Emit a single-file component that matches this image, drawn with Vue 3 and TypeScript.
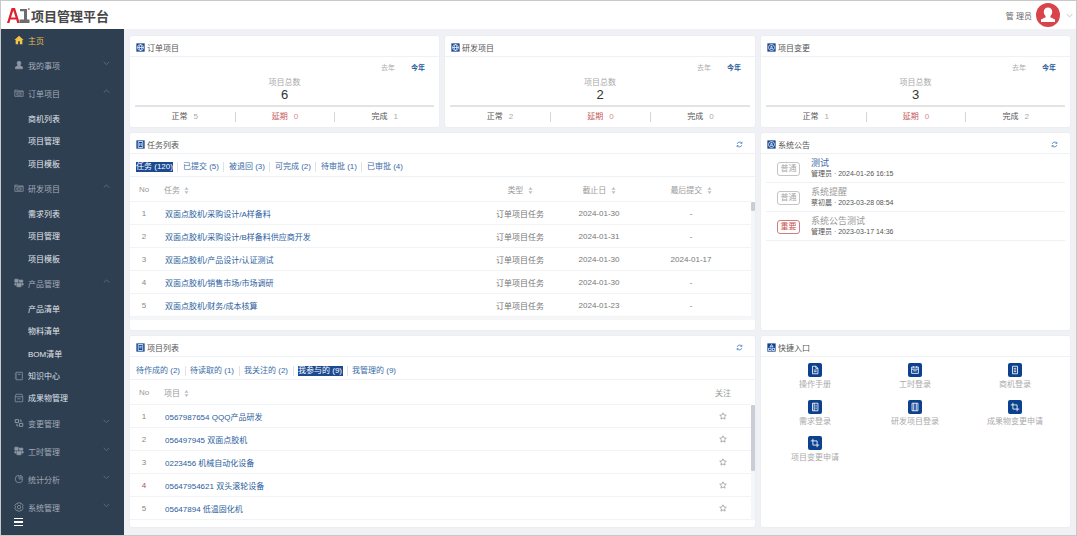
<script setup lang="ts">
type MenuItem = { label: string; icon?: string; kind: 'active' | 'parent' | 'sub' | 'leaf'; open?: boolean }

const icons: Record<string, string> = {
  user: 'M12 3a4.500 4.500 0 0 1 4.500 5c0 2-1 3.500-2 4.500v1.500l6 3v4H3.500v-4l6-3v-1.500c-1-1-2-2.500-2-4.500A4.500 4.500 0 0 1 12 3z',
  folder: 'M2 5h7l2 2h11v13H2zM2 9h20M7 12h10v5H7z',
  cubes: 'M2 3h8v7H2zM13 5h8v5h-8zM7 13h10v8H7zM2 13h3v4H2zM19 13h3v4h-3z',
  book: 'M5 3h15v18H5zM2 7h3M2 12h3M2 17h3M9 8h7',
  archive: 'M3 8l2-5h14l2 5v13H3zM3 9h18M8 14h8',
  change: 'M3 4h8v7H3zM13 13h8v7h-8zM7 14v5h3M17 10V5h-3',
  pie: 'M12 3a9 9 0 1 0 9 9h-9zM15 3a7 7 0 0 1 6 6h-6z',
  gear: 'M9 2h6l1 3 3-1 3 5-2 3 2 3-3 5-3-1-1 3H9l-1-3-3 1-3-5 2-3-2-3 3-5 3 1zM12 8a4 4 0 1 0 0 8 4 4 0 0 0 0-8z',
  doc: 'M6 3h8l5 5v13H6zM14 3v5h5M9 12h7M9 16h7',
  calendar: 'M4 5h16v15H4zM4 10h16M8 3v4M16 3v4M8 14h8',
  notebook: 'M6 3h13v18H6zM10 3v18M13 8h3M13 12h3M13 16h3',
  list: 'M6 3h12v18H6zM9 8h6M9 12h6M9 16h6',
  frame: 'M5 3h14v18H5zM9 3v18M15 3v18',
  crop: 'M7 2v15h15M2 7h15v15',
  globe: 'M12 4a8 8 0 1 0 0 16 8 8 0 0 0 0-16zM4 12h16M12 4c-5 5-5 11 0 16M12 4c5 5 5 11 0 16',
  bell: 'M12 4a8 8 0 1 0 0 16 8 8 0 0 0 0-16zM8 11h8M8 15h8M12 7v4',
  share: 'M12 4l4 6H8zM4 14h7v6H4zM14 14h6v6h-6z',
}

const menu: MenuItem[] = [
  { label: '主页', kind: 'active' },
  { label: '我的事项', icon: 'user', kind: 'parent' },
  { label: '订单项目', icon: 'folder', kind: 'parent', open: true },
  { label: '商机列表', kind: 'sub' },
  { label: '项目管理', kind: 'sub' },
  { label: '项目模板', kind: 'sub' },
  { label: '研发项目', icon: 'folder', kind: 'parent', open: true },
  { label: '需求列表', kind: 'sub' },
  { label: '项目管理', kind: 'sub' },
  { label: '项目模板', kind: 'sub' },
  { label: '产品管理', icon: 'cubes', kind: 'parent', open: true },
  { label: '产品清单', kind: 'sub' },
  { label: '物料清单', kind: 'sub' },
  { label: 'BOM清单', kind: 'sub' },
  { label: '知识中心', icon: 'book', kind: 'leaf' },
  { label: '成果物管理', icon: 'archive', kind: 'leaf' },
  { label: '变更管理', icon: 'change', kind: 'parent' },
  { label: '工时管理', icon: 'cubes', kind: 'parent' },
  { label: '统计分析', icon: 'pie', kind: 'parent' },
  { label: '系统管理', icon: 'gear', kind: 'parent' },
]

const summaries = [
  { title: '订单项目', total: 6, normal: 5, late: 0, done: 1 },
  { title: '研发项目', total: 2, normal: 2, late: 0, done: 0 },
  { title: '项目变更', total: 3, normal: 1, late: 0, done: 2 },
]

const taskTabs = ['任务 (120)', '已提交 (5)', '被退回 (3)', '可完成 (2)', '待审批 (1)', '已审批 (4)']
const tasks = [
  { name: '双面点胶机/采购设计/A样备料', end: '2024-01-30', last: '-' },
  { name: '双面点胶机/采购设计/B样备料供应商开发', end: '2024-01-31', last: '-' },
  { name: '双面点胶机/产品设计/认证测试', end: '2024-01-30', last: '2024-01-17' },
  { name: '双面点胶机/销售市场/市场调研', end: '2024-01-30', last: '-' },
  { name: '双面点胶机/财务/成本核算', end: '2024-01-23', last: '-' },
]

const projectTabs = ['待作成的 (2)', '待读取的 (1)', '我关注的 (2)', '我参与的 (9)', '我管理的 (9)']
const projects = [
  '0567987654 QQQ产品研发',
  '056497945 双面点胶机',
  '0223456 机械自动化设备',
  '05647954621 双头滚轮设备',
  '05647894 低温固化机',
]

const notices = [
  { tag: '普通', title: '测试', meta: '管理员 · 2024-01-26 16:15', hot: false, unread: true },
  { tag: '普通', title: '系统提醒', meta: '蔡初晨 · 2023-03-28 08:54', hot: false, unread: false },
  { tag: '重要', title: '系统公告测试', meta: '管理员 · 2023-03-17 14:36', hot: true, unread: false },
]

const shortcuts = [
  { label: '操作手册', icon: 'doc' },
  { label: '工时登录', icon: 'calendar' },
  { label: '商机登录', icon: 'list' },
  { label: '需求登录', icon: 'notebook' },
  { label: '研发项目登录', icon: 'frame' },
  { label: '成果物变更申请', icon: 'crop' },
  { label: '项目变更申请', icon: 'crop' },
]
</script>

<template>
  <div class="app">
    <header class="topbar">
      <div class="brand">
        <svg class="logo" viewBox="0 0 23 17" aria-hidden="true">
          <path fill="#e0202c" d="M4.600 1h3.400l4.700 15H10.200L9.200 12.500H3.400L2.400 16H0zM4 10.500H8.600L6.300 3.500z" fill-rule="evenodd" />
          <path fill="#6d6d6d" d="M13 2h7v10.500h2.500V16H12.500v-3.500H17V4.200h-4z" />
          <circle cx="21.800" cy="2" r="1" fill="#888" />
        </svg>
        <span class="brand-name">项目管理平台</span>
      </div>
      <div class="account">
        <span class="account-name">管 理员</span>
        <svg class="avatar" viewBox="0 0 24 24" aria-hidden="true">
          <circle cx="12" cy="12" r="12" fill="#d8444a" />
          <path fill="#fff" d="M12 4.500a4.200 4.200 0 0 1 4.200 4.500c0 1.800-.8 3.200-1.800 4v1.200l4.600 2.300v2.500H5v-2.500l4.600-2.300V13c-1-.8-1.800-2.200-1.800-4A4.200 4.200 0 0 1 12 4.500z" />
        </svg>
        <svg class="account-caret" viewBox="0 0 10 6" aria-hidden="true">
          <path d="M1 1l4 4 4-4" />
        </svg>
      </div>
    </header>

    <aside class="sidebar">
      <div
        v-for="(item, i) in menu"
        :key="i"
        class="menu-item"
        :class="'menu-' + item.kind"
      >
        <svg v-if="item.kind === 'active'" class="menu-icon" viewBox="0 0 24 24" aria-hidden="true">
          <path class="home" d="M12 2L1 12h3v10h6v-7h4v7h6V12h3z" />
        </svg>
        <svg v-else-if="item.icon" class="menu-icon" :class="'ic-' + item.icon" viewBox="0 0 24 24" aria-hidden="true">
          <path :d="icons[item.icon]" />
        </svg>
        <span class="menu-label">{{ item.label }}</span>
        <svg v-if="item.kind === 'parent'" class="menu-caret" viewBox="0 0 10 6" aria-hidden="true">
          <path :d="item.open ? 'M1 5l4-4 4 4' : 'M1 1l4 4 4-4'" />
        </svg>
      </div>
      <div class="collapse" aria-hidden="true"><i></i><i></i><i></i></div>
    </aside>

    <main class="board">
      <section v-for="(s, i) in summaries" :key="s.title" class="card summary">
        <div class="card-head">
          <svg class="badge" viewBox="0 0 24 24" aria-hidden="true">
            <rect width="24" height="24" fill="#0f4391" />
            <path :d="icons[i === 2 ? 'bell' : 'globe']" />
          </svg>
          <span>{{ s.title }}</span>
        </div>
        <div class="years"><span>去年</span><b>今年</b></div>
        <div class="total-label">项目总数</div>
        <div class="total">{{ s.total }}</div>
        <div class="stats">
          <div><span class="stat-name">正常</span><span class="stat-num">{{ s.normal }}</span></div>
          <div class="late"><span class="stat-name">延期</span><span class="stat-num">{{ s.late }}</span></div>
          <div><span class="stat-name">完成</span><span class="stat-num">{{ s.done }}</span></div>
        </div>
      </section>

      <section class="card wide">
        <div class="card-head">
          <svg class="badge" viewBox="0 0 24 24" aria-hidden="true">
            <rect width="24" height="24" fill="#0f4391" />
            <path d="M6 4h12v16H6zM10 8v8M14 8v8" />
          </svg>
          <span>任务列表</span>
          <svg class="refresh" viewBox="0 0 24 24" aria-hidden="true">
            <path d="M4 10a8.500 8.500 0 0 1 15-3l1 1M20 14a8.500 8.500 0 0 1-15 3l-1-1M20 3v5h-5M4 21v-5h5" />
          </svg>
        </div>
        <div class="tabs tabs-task">
          <span v-for="(t, i) in taskTabs" :key="t" class="tab" :class="{ selected: i === 0 }">{{ t }}</span>
        </div>
        <div class="table task-table">
          <div class="row head">
            <span class="c">No</span>
            <span class="name">任务 <svg class="sort" viewBox="0 0 6 9"><path d="M3 0l2.500 3.500h-5zM3 9L.5 5.500h5z" /></svg></span>
            <span class="c">类型 <svg class="sort" viewBox="0 0 6 9"><path d="M3 0l2.500 3.500h-5zM3 9L.5 5.500h5z" /></svg></span>
            <span class="c">截止日 <svg class="sort" viewBox="0 0 6 9"><path d="M3 0l2.500 3.500h-5zM3 9L.5 5.500h5z" /></svg></span>
            <span class="c">最后提交 <svg class="sort" viewBox="0 0 6 9"><path d="M3 0l2.500 3.500h-5zM3 9L.5 5.500h5z" /></svg></span>
          </div>
          <div v-for="(t, i) in tasks" :key="t.name" class="row">
            <span class="c num">{{ i + 1 }}</span>
            <span class="name link">{{ t.name }}</span>
            <span class="c">订单项目任务</span>
            <span class="c">{{ t.end }}</span>
            <span class="c">{{ t.last }}</span>
          </div>
          <div class="scroll"><i class="thumb short"></i></div>
          <div class="scroll-x"></div>
        </div>
      </section>

      <section class="card notices">
        <div class="card-head">
          <svg class="badge" viewBox="0 0 24 24" aria-hidden="true">
            <rect width="24" height="24" fill="#0f4391" />
            <path :d="icons.bell" />
          </svg>
          <span>系统公告</span>
          <svg class="refresh" viewBox="0 0 24 24" aria-hidden="true">
            <path d="M4 10a8.500 8.500 0 0 1 15-3l1 1M20 14a8.500 8.500 0 0 1-15 3l-1-1M20 3v5h-5M4 21v-5h5" />
          </svg>
        </div>
        <div v-for="n in notices" :key="n.title" class="notice">
          <span class="tag" :class="{ hot: n.hot }">{{ n.tag }}</span>
          <div class="notice-body">
            <div class="notice-title" :class="{ unread: n.unread }">{{ n.title }}</div>
            <div class="notice-meta">{{ n.meta }}</div>
          </div>
        </div>
      </section>

      <section class="card wide">
        <div class="card-head">
          <svg class="badge" viewBox="0 0 24 24" aria-hidden="true">
            <rect width="24" height="24" fill="#0f4391" />
            <path d="M6 4h12v16H6zM9 9h6M9 13h6" />
          </svg>
          <span>项目列表</span>
          <svg class="refresh" viewBox="0 0 24 24" aria-hidden="true">
            <path d="M4 10a8.500 8.500 0 0 1 15-3l1 1M20 14a8.500 8.500 0 0 1-15 3l-1-1M20 3v5h-5M4 21v-5h5" />
          </svg>
        </div>
        <div class="tabs tabs-project">
          <span v-for="(t, i) in projectTabs" :key="t" class="tab" :class="{ selected: i === 3 }">{{ t }}</span>
        </div>
        <div class="table project-table">
          <div class="row head">
            <span class="c">No</span>
            <span class="name">项目 <svg class="sort" viewBox="0 0 6 9"><path d="M3 0l2.500 3.500h-5zM3 9L.5 5.500h5z" /></svg></span>
            <span class="c">关注</span>
          </div>
          <div v-for="(p, i) in projects" :key="p" class="row">
            <span class="c num" :class="{ warn: i === 3 }">{{ i + 1 }}</span>
            <span class="name link">{{ p }}</span>
            <span class="c">
              <svg class="star" viewBox="0 0 24 24" aria-hidden="true">
                <path d="M12 2.500l3 6.300 6.800.9-5 4.800 1.300 6.900-6.100-3.400-6.100 3.400 1.300-6.900-5-4.800 6.800-.9z" />
              </svg>
            </span>
          </div>
          <div class="scroll"><i class="thumb long"></i></div>
        </div>
      </section>

      <section class="card quick">
        <div class="card-head">
          <svg class="badge" viewBox="0 0 24 24" aria-hidden="true">
            <rect width="24" height="24" fill="#0f4391" />
            <path :d="icons.share" />
          </svg>
          <span>快捷入口</span>
        </div>
        <div class="quick-grid">
          <div v-for="q in shortcuts" :key="q.label" class="quick-item">
            <svg class="quick-icon" viewBox="0 0 24 24" aria-hidden="true">
              <g transform="translate(3.360 3.360) scale(.72)"><path :d="icons[q.icon]" /></g>
            </svg>
            <span>{{ q.label }}</span>
          </div>
        </div>
      </section>
    </main>
  </div>
</template>

<style scoped>
.app {
  position: relative;
  box-sizing: border-box;
  width: 1077px;
  height: 536px;
  border: 1px solid #c9c9c9;
  display: grid;
  grid-template-columns: 123px 1fr;
  grid-template-rows: 28px 1fr;
  overflow: hidden;
  font-family: "Liberation Sans", "Noto Sans CJK SC", sans-serif;
  font-size: 8px;
  color: #666;
  background: #eff1f5;
}

.topbar {
  grid-column: 1 / -1;
  display: flex;
  align-items: center;
  justify-content: space-between;
  background: #fff;
  padding: 0 3px 0 6px;
}
.brand { display: flex; align-items: center; gap: 1px; }
.logo { width: 23px; height: 17px; margin-top: 0; }
.brand-name { font-size: 13px; font-weight: 700; color: #474747; line-height: 20px; margin-top: 3px; }
.account { display: flex; align-items: center; }
.account-name { color: #666; margin-right: 4px; }
.avatar { width: 24px; height: 24px; }
.account-caret { width: 7px; height: 5px; margin-left: 6px; fill: none; stroke: #aaa; stroke-width: 1; }

.sidebar {
  position: relative;
  background: #2e3f52;
  overflow: hidden;
}
.menu-item {
  position: relative;
  display: flex;
  align-items: center;
  height: 22.350px;
  padding-left: 27px;
  color: #e2e6eb;
}
.menu-parent { height: 28px; color: #a2abb6; }
.menu-active { color: #e3bb4d; }
.menu-leaf { color: #dde2e8; }
.menu-icon {
  position: absolute;
  left: 13px;
  top: 50%;
  width: 10px;
  height: 10px;
  transform: translateY(-50%);
  fill: none;
  stroke: #8d98a4;
  stroke-width: 1.800;
}
.menu-icon.ic-cubes,
.menu-icon.ic-user { fill: #8d98a4; }
.menu-icon.ic-change { stroke-width: 2.400; }
.menu-icon .home { fill: #f3c445; stroke: none; }
.menu-caret {
  position: absolute;
  right: 14px;
  top: 10px;
  width: 7px;
  height: 4.500px;
  fill: none;
  stroke: #6f7c8b;
  stroke-width: 1;
}
.collapse {
  position: absolute;
  left: 13px;
  bottom: 9px;
  width: 9px;
  display: flex;
  flex-direction: column;
  gap: 2px;
}
.collapse i { height: 1.500px; background: #fff; }

.board {
  display: grid;
  grid-template-columns: 309px 310px 309px;
  grid-template-rows: 91px 197px 191px;
  gap: 6px;
  padding: 7px 0 0 6px;
}
.card {
  background: #fff;
  border-radius: 2px;
  box-shadow: 0 0 2px rgba(30, 50, 90, 0.06);
  overflow: hidden;
  position: relative;
}
.wide { grid-column: span 2; }
.card-head {
  display: flex;
  align-items: center;
  height: 21px;
  box-sizing: border-box;
  padding: 2px 6px 0;
  border-bottom: 1px solid #f0f1f4;
  color: #555;
}
.badge { width: 9px; height: 9px; fill: none; stroke: #fff; stroke-width: 2; margin-right: 2px; }
.refresh {
  margin-left: auto;
  margin-right: 6px;
  width: 7px;
  height: 7px;
  fill: none;
  stroke: #3a76b8;
  stroke-width: 2.600;
}

.years {
  display: flex;
  justify-content: flex-end;
  align-items: center;
  gap: 16px;
  height: 20px;
  padding-right: 14px;
  color: #aaa;
  font-size: 7px;
}
.years b { color: #2a5d9c; }
.total-label { text-align: center; line-height: 11px; color: #aaa; }
.total { text-align: center; line-height: 14px; font-size: 13px; color: #333; font-weight: 500; }
.stats {
  display: grid;
  grid-template-columns: repeat(3, 1fr);
  margin: 3px 5px 0;
  border-top: 2px solid #e2e3e6;
  height: 19px;
  align-items: center;
}
.stats div { text-align: center; line-height: 10px; color: #555; border-left: 1px solid #d5d5d5; }
.stats div:first-child { border-left: 0; }
.stats .late { color: #c4585a; }
.stat-num { margin-left: 6px; color: #aaa; }
.late .stat-num { color: #d88a8a; }

.tabs {
  display: flex;
  align-items: center;
  height: 23px;
  box-sizing: border-box;
  padding-left: 6px;
  border-bottom: 1px solid #f0f1f4;
  color: #3a6ba8;
}
.tabs-task { padding-top: 4px; }
.tabs-project { padding-top: 5px; }
.tab { line-height: 10px; padding: 0 4.500px; border-left: 1px solid #dfe2e6; }
.tab:first-child { border-left: 0; padding-left: 0; }
.tab.selected { position: relative; color: #fff; z-index: 0; }
.tab.selected::before {
  content: "";
  position: absolute;
  top: 0;
  bottom: 0;
  left: 0;
  right: 4px;
  background: #1a4a92;
  z-index: -1;
}
.tab.selected:not(:first-child)::before { left: 4px; }

.table { position: relative; color: #777; }
.row {
  display: grid;
  align-items: center;
  height: 23px;
  box-sizing: border-box;
  border-bottom: 1px solid #f2f3f5;
}
.task-table .row { grid-template-columns: 28px 322px 80px 78px 106px; width: 621px; }
.project-table .row { grid-template-columns: 28px 537px 56px; width: 621px; }
.row.head { height: 25px; color: #9a9a9a; }
.c { text-align: center; }
.name { padding-left: 7px; }
.head .name { padding-left: 6px; }
.num { color: #888; }
.warn { color: #b4534c; }
.link { color: #2a5d9c; }
.sort { width: 5px; height: 7px; margin-left: 2px; fill: #b9bec6; vertical-align: -1px; }
.star { width: 8px; height: 8px; fill: none; stroke: #8a8a8a; stroke-width: 2; vertical-align: middle; }

.scroll {
  position: absolute;
  left: 621px;
  top: 25px;
  width: 4px;
  bottom: 0;
  background: #f5f6f8;
}
.thumb { display: block; background: #c9ced6; border-radius: 1px; }
.thumb.short { height: 9px; }
.thumb.long { height: 66px; }
.scroll-x { height: 3px; background: #f5f6f8; width: 621px; }

.notice {
  display: flex;
  align-items: center;
  height: 29px;
  box-sizing: border-box;
  margin: 0 5px;
  padding-left: 11px;
  border-bottom: 1px solid #f0f1f4;
}
.tag {
  box-sizing: border-box;
  width: 23px;
  height: 14px;
  line-height: 12px;
  text-align: center;
  border: 1px solid #c4c4c4;
  border-radius: 3px;
  color: #aaa;
  margin-right: 11px;
  margin-top: 2px;
}
.tag.hot { border-color: #cf7d7d; color: #c9534f; }
.notice-body { padding-top: 1px; }
.notice-title { font-size: 9px; line-height: 11px; color: #999; }
.notice-title.unread { color: #3a6ba8; }
.notice-meta { font-size: 7px; line-height: 10px; color: #555; }

.quick-grid {
  display: grid;
  grid-template-columns: repeat(3, 100px);
  grid-auto-rows: 36.500px;
  padding: 6px 4px 0;
}
.quick-item {
  display: flex;
  flex-direction: column;
  align-items: center;
  color: #aaa;
  line-height: 10px;
  gap: 3px;
}
.quick-icon {
  width: 14px;
  height: 14px;
  background: #0c418f;
  border-radius: 2px;
  fill: none;
  stroke: #fff;
  stroke-width: 2;
}
</style>
